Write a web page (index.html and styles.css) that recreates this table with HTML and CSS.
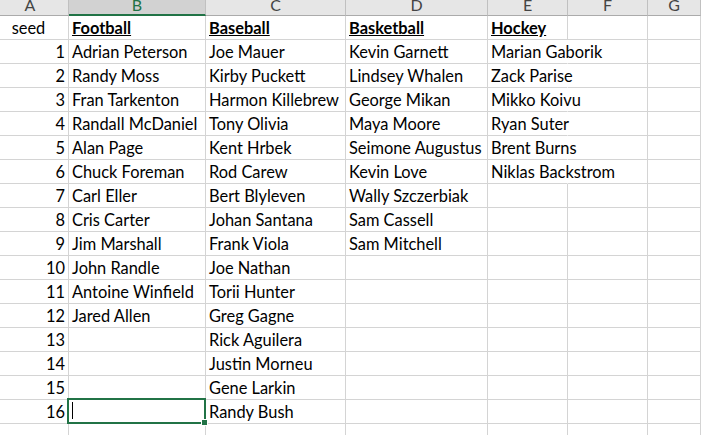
FILE: index.html
```
<!DOCTYPE html>
<html>
<head>
<meta charset="utf-8">
<link rel="stylesheet" href="styles.css">
</head>
<body>
<div class="sheet">
  <div class="hd hd-a">A</div><div class="hd sel">B</div><div class="hd">C</div><div class="hd">D</div><div class="hd">E</div><div class="hd">F</div><div class="hd">G</div>

  <div class="c seed">seed</div><div class="c h">Football</div><div class="c h">Baseball</div><div class="c h">Basketball</div><div class="c h">Hockey</div><div class="c"></div><div class="c"></div>

  <div class="c n">1</div><div class="c">Adrian Peterson</div><div class="c">Joe Mauer</div><div class="c">Kevin Garnett</div><div class="c spill">Marian Gaborik</div><div class="c"></div><div class="c"></div>
  <div class="c n">2</div><div class="c">Randy Moss</div><div class="c">Kirby Puckett</div><div class="c">Lindsey Whalen</div><div class="c spill">Zack Parise</div><div class="c"></div><div class="c"></div>
  <div class="c n">3</div><div class="c">Fran Tarkenton</div><div class="c">Harmon Killebrew</div><div class="c">George Mikan</div><div class="c spill">Mikko Koivu</div><div class="c"></div><div class="c"></div>
  <div class="c n">4</div><div class="c">Randall McDaniel</div><div class="c">Tony Olivia</div><div class="c">Maya Moore</div><div class="c spill">Ryan Suter</div><div class="c"></div><div class="c"></div>
  <div class="c n">5</div><div class="c">Alan Page</div><div class="c">Kent Hrbek</div><div class="c">Seimone Augustus</div><div class="c spill">Brent Burns</div><div class="c"></div><div class="c"></div>
  <div class="c n">6</div><div class="c">Chuck Foreman</div><div class="c">Rod Carew</div><div class="c">Kevin Love</div><div class="c spill">Niklas Backstrom</div><div class="c"></div><div class="c"></div>
  <div class="c n">7</div><div class="c">Carl Eller</div><div class="c">Bert Blyleven</div><div class="c">Wally Szczerbiak</div><div class="c"></div><div class="c"></div><div class="c"></div>
  <div class="c n">8</div><div class="c">Cris Carter</div><div class="c">Johan Santana</div><div class="c">Sam Cassell</div><div class="c"></div><div class="c"></div><div class="c"></div>
  <div class="c n">9</div><div class="c">Jim Marshall</div><div class="c">Frank Viola</div><div class="c">Sam Mitchell</div><div class="c"></div><div class="c"></div><div class="c"></div>
  <div class="c n">10</div><div class="c">John Randle</div><div class="c">Joe Nathan</div><div class="c"></div><div class="c"></div><div class="c"></div><div class="c"></div>
  <div class="c n">11</div><div class="c">Antoine Winfield</div><div class="c">Torii Hunter</div><div class="c"></div><div class="c"></div><div class="c"></div><div class="c"></div>
  <div class="c n">12</div><div class="c">Jared Allen</div><div class="c">Greg Gagne</div><div class="c"></div><div class="c"></div><div class="c"></div><div class="c"></div>
  <div class="c n">13</div><div class="c"></div><div class="c">Rick Aguilera</div><div class="c"></div><div class="c"></div><div class="c"></div><div class="c"></div>
  <div class="c n">14</div><div class="c"></div><div class="c">Justin Morneu</div><div class="c"></div><div class="c"></div><div class="c"></div><div class="c"></div>
  <div class="c n">15</div><div class="c"></div><div class="c">Gene Larkin</div><div class="c"></div><div class="c"></div><div class="c"></div><div class="c"></div>
  <div class="c n">16</div><div class="c"></div><div class="c">Randy Bush</div><div class="c"></div><div class="c"></div><div class="c"></div><div class="c"></div>
  <div class="c"></div><div class="c"></div><div class="c"></div><div class="c"></div><div class="c"></div><div class="c"></div><div class="c"></div>

  <div class="selection"><div class="caret"></div><div class="handle"></div></div>
</div>
</body>
</html>
```

FILE: styles.css
```
html, body {
  margin: 0;
  padding: 0;
  background: #ffffff;
  overflow: hidden;
}

.sheet {
  position: relative;
  display: grid;
  grid-template-columns: 69px 137px 140px 142px 80px 80px 1fr;
  grid-template-rows: 16px;
  grid-auto-rows: 24px;
  width: 701px;
  font-family: "Lato", "Liberation Sans", sans-serif;
  font-size: 16.4px;
  color: #000;
}

.hd {
  box-sizing: border-box;
  background: #e6e6e6;
  color: #444444;
  text-align: center;
  font-size: 16px;
  line-height: 9px;
  border-right: 1px solid #c0c0c0;
  border-bottom: 1px solid #ababab;
  overflow: hidden;
}

.hd-a {
  padding-right: 8px;
}

.hd.sel {
  background: #d2d2d2;
  color: #217346;
  border-bottom: 2px solid #217346;
}

.c {
  box-sizing: border-box;
  border-right: 1px solid #d4d4d4;
  border-bottom: 1px solid #d4d4d4;
  padding: 2px 3px 0 3px;
  line-height: 20px;
  white-space: nowrap;
  overflow: visible;
}

.c.n {
  text-align: right;
}

.c.seed {
  text-align: center;
  padding-right: 14px;
}

.c.h {
  font-weight: bold;
  text-decoration: underline;
}

.c.spill {
  border-right-color: transparent;
}

.selection {
  position: absolute;
  left: 67px;
  top: 398px;
  width: 139px;
  height: 26px;
  box-sizing: border-box;
  border: 2px solid #217346;
}

.caret {
  position: absolute;
  left: 3px;
  top: 2px;
  width: 1px;
  height: 17px;
  background: #000;
}

.handle {
  position: absolute;
  right: -4px;
  bottom: -4px;
  width: 5px;
  height: 5px;
  background: #217346;
  border: 1px solid #ffffff;
}
```
